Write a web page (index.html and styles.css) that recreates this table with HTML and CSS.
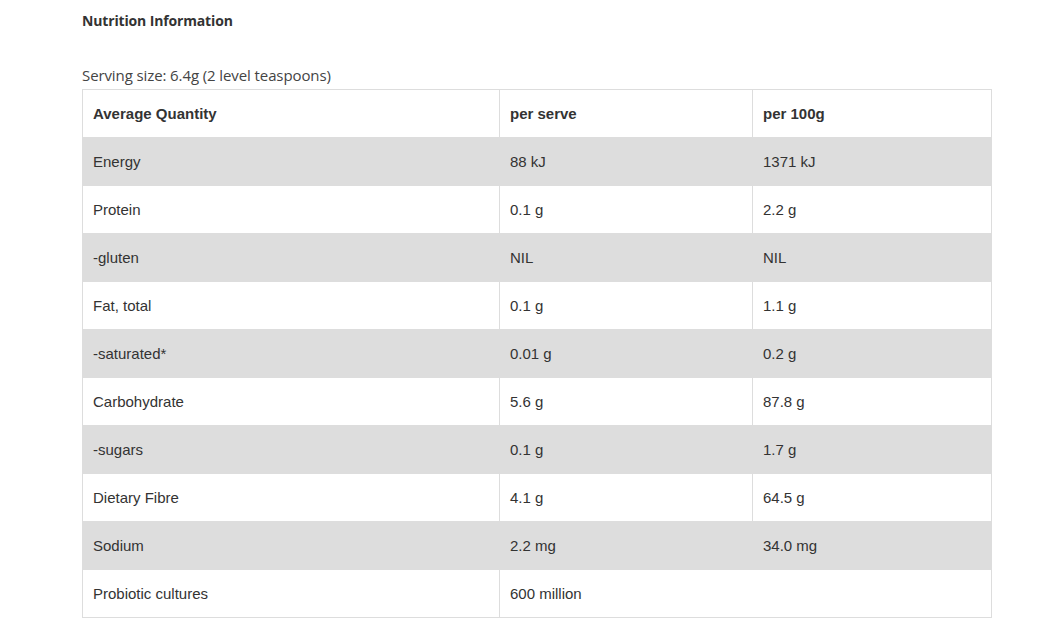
FILE: index.html
```html
<!DOCTYPE html>
<html>
<head>
<meta charset="utf-8">
<link rel="stylesheet" href="styles.css">
</head>
<body>
<div class="wrap">
  <h4 class="title">Nutrition Information</h4>
  <p class="serving">Serving size: 6.4g (2 level teaspoons)</p>
  <table class="nutri">
    <colgroup><col class="c1"><col class="c2"><col class="c3"></colgroup>
    <tr class="head"><th>Average Quantity</th><th>per serve</th><th>per 100g</th></tr>
    <tr class="alt"><td>Energy</td><td>88 kJ</td><td>1371 kJ</td></tr>
    <tr><td>Protein</td><td>0.1 g</td><td>2.2 g</td></tr>
    <tr class="alt"><td>-gluten</td><td>NIL</td><td>NIL</td></tr>
    <tr><td>Fat, total</td><td>0.1 g</td><td>1.1 g</td></tr>
    <tr class="alt"><td>-saturated*</td><td>0.01 g</td><td>0.2 g</td></tr>
    <tr><td>Carbohydrate</td><td>5.6 g</td><td>87.8 g</td></tr>
    <tr class="alt"><td>-sugars</td><td>0.1 g</td><td>1.7 g</td></tr>
    <tr><td>Dietary Fibre</td><td>4.1 g</td><td>64.5 g</td></tr>
    <tr class="alt"><td>Sodium</td><td>2.2 mg</td><td>34.0 mg</td></tr>
    <tr><td>Probiotic cultures</td><td colspan="2">600 million</td></tr>
  </table>
</div>
</body>
</html>
```
FILE: styles.css
```css
html, body { margin: 0; padding: 0; background: #fff; }
body { font-family: "Liberation Sans", Arial, sans-serif; color: #333; }
.wrap { padding-left: 82px; width: 909px; }
.title {
  margin: 11px 0 0 0;
  font-family: "Open Sans", sans-serif;
  font-weight: 700;
  font-size: 14px;
  letter-spacing: -0.15px;
  line-height: 20px;
  color: #333;
}
.serving {
  margin: 34px 0 4px 0;
  font-family: "Open Sans", sans-serif;
  font-size: 15px;
  letter-spacing: -0.1px;
  line-height: 20px;
  color: #444;
}
.nutri {
  width: 909px;
  border-collapse: collapse;
  table-layout: fixed;
  border: 1px solid #ddd;
}
.c1 { width: 417px; }
.c2 { width: 253px; }
.c3 { width: 239px; }
.nutri th, .nutri td {
  height: 48px;
  padding: 0 10px;
  border: 1px solid #ddd;
  text-align: left;
  vertical-align: middle;
  font-size: 15px;
  line-height: 20px;
  box-sizing: border-box;
}
.nutri th { font-weight: 700; color: #333; }
.nutri tr.alt td { background: #ddd; }
```
